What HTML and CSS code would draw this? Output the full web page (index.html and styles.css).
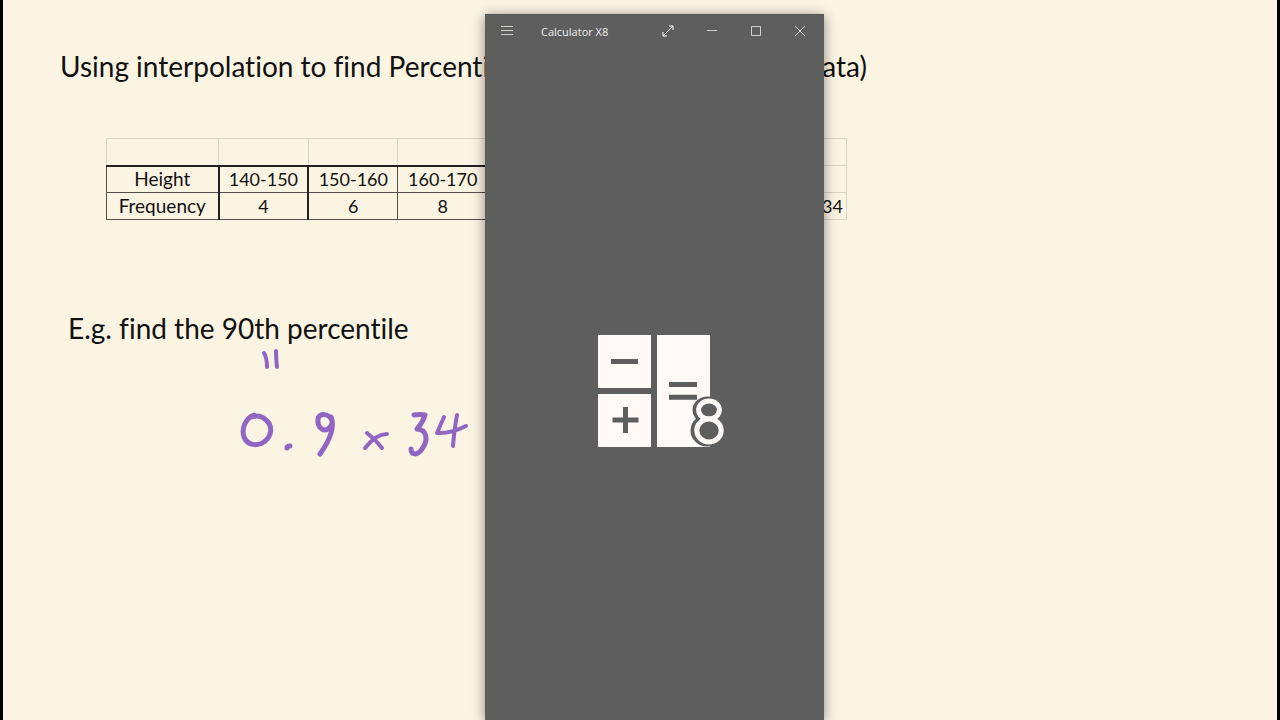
FILE: index.html
```html
<!DOCTYPE html>
<html lang="en">
<head>
    <meta charset="UTF-8">
    <meta name="viewport" content="width=device-width, initial-scale=1.0">
    <title>Percentiles</title>
    <link rel="stylesheet" href="styles.css">
</head>
<body>

<main class="slide">
    <h1 class="slide-title">
        <span>Using interpolation to find Percentiles</span>
        <span>(grouped data)</span>
    </h1>

    <table class="data-table">
        <tr class="blank-row">
            <td class="label"></td><td></td><td></td><td></td><td></td><td></td><td></td><td class="total"></td>
        </tr>
        <tr class="height-row">
            <th class="label" scope="row">Height</th>
            <td class="heavy">140-150</td>
            <td class="heavy">150-160</td>
            <td>160-170</td>
            <td></td><td></td><td></td>
            <td class="total"></td>
        </tr>
        <tr>
            <th class="label" scope="row">Frequency</th>
            <td class="heavy">4</td>
            <td class="heavy">6</td>
            <td>8</td>
            <td></td><td></td><td></td>
            <td class="total">34</td>
        </tr>
    </table>

    <p class="question">E.g. find the 90th percentile</p>

    <!-- pen strokes -->
    <svg class="ink" width="260" height="120" viewBox="230 345 260 120" role="img" aria-label="= 0.9 x 34">
        <path d="M264 353 Q267 358 267 367"/>
        <path d="M276 351 Q276 359 277 367"/>
        <path class="thick" d="M254 415 C246 418 241 428 244 437 C247 445 257 447 264 442 C272 436 273 426 266 420 C262 416 257 415 252 417"/>
        <path class="thick" d="M287 448 Q287 446 290 446"/>
        <path class="thick" d="M332 420 C328 413 319 413 318 419 C317 427 323 432 328 429 C332 426 333 421 331 417 C335 427 330 440 320 454"/>
        <path d="M367 433 Q376 440 382 448 M387 434 Q376 434 365 448"/>
        <path class="thick" d="M414 415 Q421 414 425 415 Q423 422 417 429 C428 430 428 441 422 449 C417 456 411 455 411 449"/>
        <path d="M444 417 Q440 426 437 433 Q450 434 466 426 M457 415 Q454 432 453 446"/>
    </svg>
</main>

<section class="calc-window">
    <header class="title-bar">
        <button class="bar-button menu" aria-label="Menu">
            <svg width="12" height="12" viewBox="0 0 12 12"><path d="M0 1.5H12M0 5.5H12M0 9.5H12"/></svg>
        </button>
        <span class="app-name">Calculator X8</span>
        <button class="bar-button" aria-label="Keep on top">
            <svg class="bright" width="12" height="12" viewBox="0 0 12 12"><path d="M1 11L11 1M7 1H11V5M1 7V11H5"/></svg>
        </button>
        <button class="bar-button" aria-label="Minimize">
            <svg width="12" height="12" viewBox="0 0 12 12"><path d="M1 5.500H11"/></svg>
        </button>
        <button class="bar-button" aria-label="Maximize">
            <svg width="12" height="12" viewBox="0 0 12 12"><path d="M1.500 1.500H10.500V10.500H1.500Z"/></svg>
        </button>
        <button class="bar-button" aria-label="Close">
            <svg width="12" height="12" viewBox="0 0 12 12"><path d="M1 1L11 11M11 1L1 11"/></svg>
        </button>
    </header>
    <div class="splash">
        <svg class="logo" width="128" height="114" viewBox="0 0 128 114" role="img" aria-label="Calculator X8">
            <rect class="tile" x="1" y="1" width="53" height="53"/>
            <rect class="tile" x="1" y="60" width="53" height="53"/>
            <rect class="tile" x="60" y="1" width="53" height="112"/>
            <path class="sign" d="M14 27.500H41M15.500 86H41.500M28.500 73V99M72 50.500H100M72 63.300H100"/>
            <g class="badge-edge">
                <ellipse cx="110.500" cy="76" rx="11" ry="9.600"/>
                <ellipse cx="110.500" cy="96.500" rx="13" ry="12"/>
            </g>
            <g class="badge">
                <ellipse cx="112" cy="76" rx="10.400" ry="9"/>
                <ellipse cx="112" cy="96.500" rx="12.200" ry="11.500"/>
            </g>
        </svg>
    </div>
</section>

</body>
</html>
```
FILE: styles.css
```css
* {
    box-sizing: border-box;
}
body {
    margin: 0;
    background-color: #fcf4e3;
    color: #111;
    font-family: Lato, "Open Sans", sans-serif;
    font-variant-ligatures: none;
}
.slide {
    position: relative;
    min-height: 100vh;
    padding: 46px 57px 0;
    border: solid #000;
    border-width: 0 3px;
}
.slide-title {
    display: flex;
    justify-content: space-between;
    max-width: 807px;
    margin: 0;
    font-size: 28px;
    font-weight: 400;
    line-height: 40px;
    white-space: nowrap;
}
.data-table {
    width: 741px;
    margin: 52px 0 0 46px;
    border-collapse: collapse;
    table-layout: fixed;
    font-size: 18px;
    line-height: 24px;
    text-align: center;
}
.data-table td,
.data-table th {
    height: 27px;
    padding: 0;
    border: 1px solid #555048;
    font-weight: 400;
}
.data-table th {
    font-size: 19px;
}
.data-table .label {
    width: 112px;
}
.data-table .heavy {
    border-left: 2px solid #222;
}
.data-table .blank-row td {
    border-color: #d9d2c5;
}
.data-table .height-row th,
.data-table .height-row td {
    border-top: 2px solid #222;
}
.data-table td.total,
.data-table .height-row td.total {
    padding-right: 3px;
    border: 1px solid #d9d2c5;
    text-align: right;
}
.question {
    margin: 88px 0 0 8px;
    font-size: 28px;
    line-height: 40px;
}
.ink {
    position: absolute;
    left: 227px;
    top: 345px;
    fill: none;
    stroke: #9166c3;
    stroke-width: 4;
    stroke-linecap: round;
    stroke-linejoin: round;
}
.ink .thick {
    stroke-width: 5;
}
.calc-window {
    position: absolute;
    top: 14px;
    bottom: 0;
    left: 485px;
    width: 339px;
    display: flex;
    flex-direction: column;
    background-color: #5e5e5e;
    border-top: 1px solid #55554b;
    box-shadow: 0 2px 12px rgba(0, 0, 0, 0.45);
}
.title-bar {
    display: flex;
    align-items: center;
    height: 32px;
    padding-right: 2px;
    color: #eee;
    font-family: "Open Sans", sans-serif;
    font-size: 11px;
}
.app-name {
    flex: 1;
    padding-left: 12px;
}
.bar-button {
    display: flex;
    align-items: center;
    justify-content: center;
    width: 44px;
    height: 32px;
    padding: 0;
    border: none;
    background: none;
}
.bar-button svg {
    fill: none;
    stroke: #d0d0c8;
    stroke-width: 1;
}
.bar-button .bright {
    stroke: #fff;
}
.splash {
    flex: 1;
    display: flex;
    align-items: center;
    justify-content: center;
    padding: 14px 0 0 12px;
}
.tile {
    fill: #fffaf8;
}
.sign {
    fill: none;
    stroke: #5e5e5e;
    stroke-width: 5;
}
.badge,
.badge-edge {
    fill: #5e5e5e;
    stroke: #fffaf8;
    stroke-width: 5;
}
.badge-edge {
    stroke: #5e5e5e;
    stroke-width: 8;
}
```
